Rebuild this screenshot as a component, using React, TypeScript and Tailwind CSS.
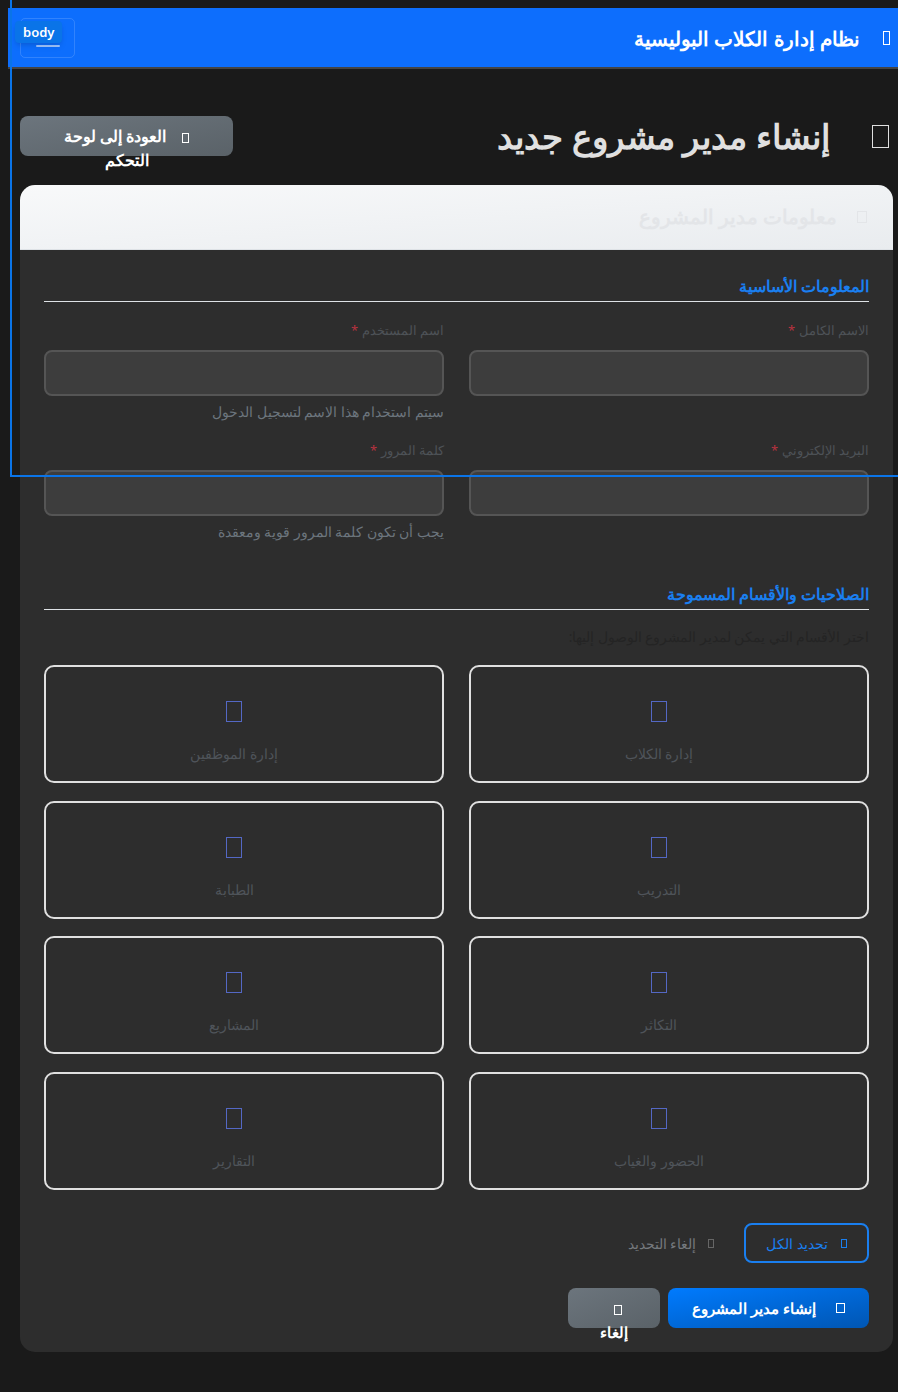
import React from "react";

// missing-icon boxes, as the page shows them (icon font not loaded)
function Tofu({ className = "" }: { className?: string }) {
  return (
    <span
      aria-hidden
      className={`inline-block shrink-0 border border-current align-middle ${className}`}
    />
  );
}

const fieldRows = [
  [
    { label: "الاسم الكامل", help: "" },
    { label: "اسم المستخدم", help: "سيتم استخدام هذا الاسم لتسجيل الدخول" },
  ],
  [
    { label: "البريد الإلكتروني", help: "" },
    { label: "كلمة المرور", help: "يجب أن تكون كلمة المرور قوية ومعقدة" },
  ],
];

const sections = [
  "إدارة الكلاب",
  "إدارة الموظفين",
  "التدريب",
  "الطبابة",
  "التكاثر",
  "المشاريع",
  "الحضور والغياب",
  "التقارير",
];

export default function App() {
  return (
    <div
      dir="rtl"
      className="relative min-h-screen overflow-hidden bg-[#1a1a1a] pb-[20px] font-['Noto_Sans',sans-serif]"
    >
      <nav className="ml-2 mt-2 flex h-[61px] items-center justify-between border-b-2 border-[#444] bg-[#0d6efd] pl-[12px] pr-[8px]">
        <div className="flex items-center gap-[23px] text-white">
          <Tofu className="h-[14px] w-[7px]" />
          <span className="text-[20.2px] font-bold leading-7">
            نظام إدارة الكلاب البوليسية
          </span>
        </div>
        <button className="flex h-[40px] w-[55px] items-center justify-center rounded-[5px] border border-white/15">
          <svg width="30" height="30" viewBox="0 0 30 30" className="text-white/60">
            <path
              d="M4 7h22M4 15h22M4 23h22"
              stroke="currentColor"
              strokeWidth="2"
              strokeLinecap="round"
            />
          </svg>
        </button>
      </nav>

      <div className="mb-[29px] ml-[20px] mr-[5px] mt-[47px] flex items-center justify-between">
        <h1 className="mr-[4px] flex items-center gap-[42px] text-[33.6px] font-bold leading-[38px] text-[#e0e0e0]">
          <Tofu className="h-[23px] w-[17px]" />
          إنشاء مدير مشروع جديد
        </h1>
        <button className="h-10 w-[213px] rounded-lg bg-gradient-to-br from-[#6c757d] to-[#5a6268] px-[25px] py-2 text-center text-[16px] font-bold leading-6 text-white">
          <Tofu className="ml-[12px] h-[10px] w-[7px]" /> العودة إلى لوحة التحكم
        </button>
      </div>

      <div className="ml-[20px] mr-[5px] overflow-hidden rounded-[15px] bg-[#2d2d2d]">
        <div className="flex h-[65px] items-center gap-[20px] border-b border-[#dee2e6] bg-gradient-to-br from-[#f8f9fa] to-[#e9ecef] px-[26px]">
          <Tofu className="h-[12px] w-[10px] text-[#e3e5e8]" />
          <h2 className="text-[19.5px] font-bold leading-7 text-[#e3e5e8]">
            معلومات مدير المشروع
          </h2>
        </div>

        <div className="p-[24px]">
          <h3 className="mb-[18px] border-b border-[#dee2e6] pb-[3px] text-[16px] font-semibold leading-6 text-[#1a7ff0]">
            المعلومات الأساسية
          </h3>

          {fieldRows.map((row, i) => (
            <div key={i} className="grid grid-cols-2 items-start gap-x-[25px]">
              {row.map((f) => (
                <div key={f.label} className="mb-[18px]">
                  <label className="mb-[9px] block text-[13px] leading-[21px] text-[#4d5257]">
                    {f.label} <span className="text-[#b8323f]">*</span>
                  </label>
                  <div className="h-[46px] w-full rounded-lg border-2 border-[#555] bg-[#3d3d3d]" />
                  {f.help && (
                    <p className="mt-[6px] text-[13.5px] leading-5 text-[#6c757d]">
                      {f.help}
                    </p>
                  )}
                </div>
              ))}
            </div>
          ))}

          <h3 className="mb-[17px] mt-[22px] border-b border-[#dee2e6] pb-[3px] text-[16px] font-semibold leading-6 text-[#1a7ff0]">
            الصلاحيات والأقسام المسموحة
          </h3>
          <p className="mb-[18px] text-[13.5px] leading-5 text-[#242424]">
            اختر الأقسام التي يمكن لمدير المشروع الوصول إليها:
          </p>

          <div className="grid grid-cols-2 gap-x-[25px] gap-y-[17.5px]">
            {sections.map((s) => (
              <div
                key={s}
                className="flex h-[118px] flex-col items-center rounded-[10px] border-2 border-[#e0e0e0] pr-[20px] pt-[34px]"
              >
                <Tofu className="h-[21px] w-[16px] text-[#5468c4]" />
                <span className="mt-[21px] text-[13.6px] leading-[21px] text-[#4f545a]">
                  {s}
                </span>
              </div>
            ))}
          </div>

          <div className="mt-[33.5px] flex gap-[10px]">
            <button className="inline-flex h-10 items-center gap-[13px] rounded-lg border-2 border-[#1a7ff0] px-5 text-[14px] font-medium text-[#1a7ff0]">
              <Tofu className="h-[9px] w-[6px]" />
              تحديد الكل
            </button>
            <button className="inline-flex h-10 items-center gap-[12px] rounded-lg border-2 border-transparent pl-5 pr-[18px] text-[14px] font-medium text-[#75797e]">
              <Tofu className="h-[9px] w-[6px] text-[#666]" />
              إلغاء التحديد
            </button>
          </div>

          <div className="mt-[25px] flex gap-2">
            <button className="inline-flex h-10 items-center gap-5 rounded-lg bg-gradient-to-br from-[#007bff] to-[#0056b3] px-6 text-[15px] font-bold text-white">
              <Tofu className="h-[10px] w-[9px]" />
              إنشاء مدير المشروع
            </button>
            <button className="h-10 w-[92px] rounded-lg bg-gradient-to-br from-[#6c757d] to-[#5a6268] px-[30px] py-2 text-center text-[15px] font-bold leading-6 text-white">
              <Tofu className="ml-[7px] h-[10px] w-[8px]" /> إلغاء
            </button>
          </div>
        </div>
      </div>

      {/* inspector outline over the page */}
      <div className="pointer-events-none absolute left-[10px] top-[-2px] h-[479px] w-[900px] border-2 border-[#0a74e8]" />
      <div
        dir="ltr"
        className="pointer-events-none absolute left-[15px] top-[21px] rounded-[4px] bg-[#0a74e8] px-[8px] text-[13px] font-semibold leading-[22px] text-white shadow-md"
      >
        body
      </div>
    </div>
  );
}
